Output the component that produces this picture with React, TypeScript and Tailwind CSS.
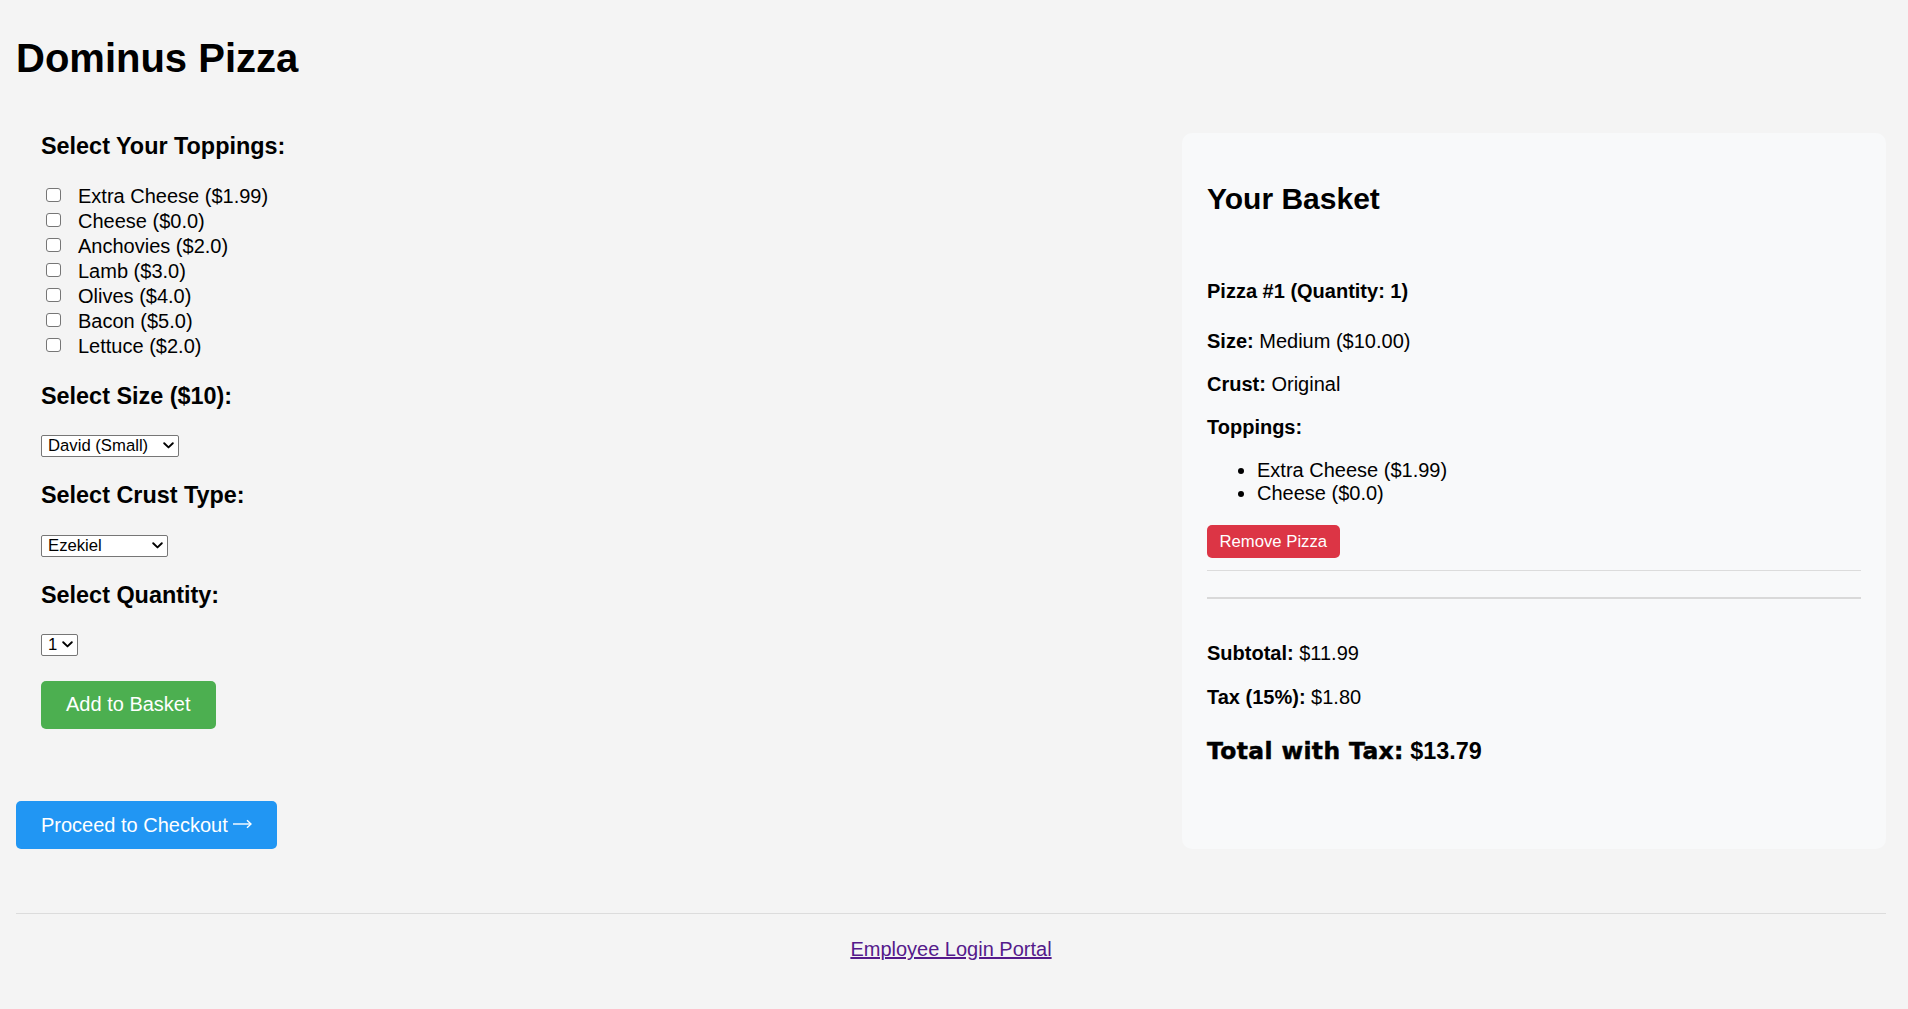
import { useState } from "react";

const toppings = [
  { name: "Extra Cheese", price: "1.99" },
  { name: "Cheese", price: "0.0" },
  { name: "Anchovies", price: "2.0" },
  { name: "Lamb", price: "3.0" },
  { name: "Olives", price: "4.0" },
  { name: "Bacon", price: "5.0" },
  { name: "Lettuce", price: "2.0" },
];

function Chevron() {
  return (
    <svg
      viewBox="0 0 11 7"
      className="pointer-events-none absolute right-[5px] top-[7.5px] w-[11px] h-[7px]"
      fill="none"
      stroke="#000"
      strokeWidth="1.9"
      strokeLinecap="round"
      strokeLinejoin="round"
    >
      <path d="M1.2 1.2 L5.5 5.4 L9.8 1.2" />
    </svg>
  );
}

function Select({ width, options }: { width: string; options: string[] }) {
  return (
    <div className={`relative h-[22px] ${width}`}>
      <select className="appearance-none w-full h-full bg-white border border-[#767676] rounded-[2px] pl-[6px] pr-[18px] text-[16.7px] leading-[20px] text-black outline-none">
        {options.map((o) => (
          <option key={o}>{o}</option>
        ))}
      </select>
      <Chevron />
    </div>
  );
}

export default function App() {
  const [checked, setChecked] = useState<boolean[]>(toppings.map(() => false));

  return (
    <div className="min-h-screen bg-[#f4f4f4] font-['Liberation_Sans',Arial,sans-serif] text-black pl-[16px] pr-[22px] pt-[35px] pb-[40px]">
      <h1 className="text-[40px] leading-[46px] font-bold">Dominus Pizza</h1>

      <div className="mt-[51.5px] flex items-stretch gap-[25px]">
        {/* ORDER FORM */}
        <div className="flex-1">
          <div className="px-[25px]">
            <h3 className="text-[23.4px] leading-[27px] font-bold">Select Your Toppings:</h3>
            <div className="mt-[24px]">
              {toppings.map((t, i) => (
                <label key={t.name} className="flex items-start h-[25px] text-[20px] leading-[23px]">
                  <input
                    type="checkbox"
                    checked={checked[i]}
                    onChange={() => setChecked(checked.map((c, j) => (j === i ? !c : c)))}
                    className="appearance-none mt-[4px] ml-[5px] w-[14.5px] h-[14px] shrink-0 bg-white border border-[#767676] rounded-[3px]"
                  />
                  <span className="ml-[17.5px] pt-[1px]">
                    {t.name} (${t.price})
                  </span>
                </label>
              ))}
            </div>

            <h3 className="mt-[24.5px] text-[23.4px] leading-[27px] font-bold">Select Size ($10):</h3>
            <div className="mt-[24px]">
              <Select width="w-[138px]" options={["David (Small)", "Medium", "Goliath (Large)"]} />
            </div>

            <h3 className="mt-[25.5px] text-[23.4px] leading-[27px] font-bold">Select Crust Type:</h3>
            <div className="mt-[25.5px]">
              <Select width="w-[127px]" options={["Ezekiel", "Original", "Thin"]} />
            </div>

            <h3 className="mt-[25.5px] text-[23.4px] leading-[27px] font-bold">Select Quantity:</h3>
            <div className="mt-[24.6px]">
              <Select width="w-[36.5px]" options={["1", "2", "3", "4", "5"]} />
            </div>

            <button className="mt-[25.5px] h-[48px] px-[25px] rounded-[5px] bg-[#4caf50] text-white text-[20px] leading-[23px]">
              Add to Basket
            </button>
          </div>

          <button className="mt-[72.8px] h-[48px] pl-[25px] pr-[25px] rounded-[5px] bg-[#2196f3] text-white text-[20px] leading-[23px] inline-flex items-center">
            Proceed to Checkout
            <svg viewBox="0 0 19 10" className="ml-[5px] mt-[-2px] w-[19px] h-[10px]" fill="none" stroke="#fff" strokeWidth="1.4">
              <path d="M0 5 H18" />
              <path d="M14 1.2 L18 5 L14 8.8" strokeLinejoin="miter" />
            </svg>
          </button>
        </div>

        {/* BASKET */}
        <div className="w-[704px] bg-[#f8f9fa] rounded-[10px] px-[25px] pt-[25px] pb-[25px]">
          <h2 className="mt-[24px] text-[30px] leading-[34.5px] font-bold">Your Basket</h2>

          <div className="border-b border-[#dcdcdc] pb-[12.3px] text-[20px] leading-[23px]">
            <h4 className="mt-[63.7px] font-bold">Pizza #1 (Quantity: 1)</h4>
            <p className="mt-[27px]">
              <strong>Size:</strong> Medium ($10.00)
            </p>
            <p className="mt-[20.3px]">
              <strong>Crust:</strong> Original
            </p>
            <p className="mt-[19.7px]">
              <strong>Toppings:</strong>
            </p>
            <ul className="mt-[20.5px] list-disc pl-[50px]">
              <li>Extra Cheese ($1.99)</li>
              <li>Cheese ($0.0)</li>
            </ul>
            <button className="mt-[20px] h-[33px] px-[12.5px] rounded-[5px] bg-[#dc3545] text-white text-[16.7px] leading-[19px]">
              Remove Pizza
            </button>
          </div>

          <div className="mt-[25.3px] h-[2px] bg-[#d9d9d9]" />

          <div className="text-[20px] leading-[23px]">
            <p className="mt-[43.6px]">
              <strong>Subtotal:</strong> $11.99
            </p>
            <p className="mt-[20.3px]">
              <strong>Tax (15%):</strong> $1.80
            </p>
          </div>
          <h3 className="mt-[29.5px] text-[23.4px] leading-[27px] font-bold">
            <strong className="font-['DejaVu_Sans',sans-serif] font-bold tracking-[0.4px] [-webkit-text-stroke:0.5px_#000]">
              Total with Tax:
            </strong>{" "}
            $13.79
          </h3>
        </div>
      </div>

      <div className="mt-[63.3px] border-t border-[#dcdcdc] pt-[24.6px] text-center">
        <a href="#" className="text-[20px] leading-[23px] text-[#551a8b] underline">
          Employee Login Portal
        </a>
      </div>
    </div>
  );
}
